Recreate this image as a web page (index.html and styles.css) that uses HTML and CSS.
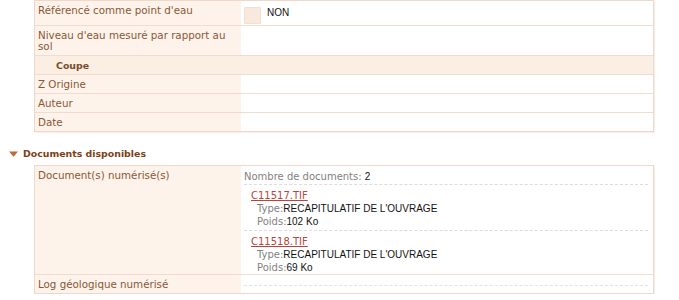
FILE: index.html
```html
<!DOCTYPE html>
<html lang="fr">
<head>
<meta charset="utf-8">
<title>Fiche ouvrage</title>
<link rel="stylesheet" href="styles.css">
</head>
<body>
<div class="sheet">
  <div class="table">
    <div class="row">
      <div class="label">Référencé comme point d'eau</div>
      <div class="value check-cell"><span class="checkbox"></span><span class="val">NON</span></div>
    </div>
    <div class="row">
      <div class="label">Niveau d'eau mesuré par rapport au sol</div>
      <div class="value"></div>
    </div>
    <div class="row group">
      <div class="group-title">Coupe</div>
    </div>
    <div class="row">
      <div class="label">Z Origine</div>
      <div class="value"></div>
    </div>
    <div class="row">
      <div class="label">Auteur</div>
      <div class="value"></div>
    </div>
    <div class="row last">
      <div class="label">Date</div>
      <div class="value"></div>
    </div>
  </div>

  <div class="section-title">
    <svg class="caret" width="9" height="6" viewBox="0 0 9 6"><path d="M0 0.5 H9 L4.5 5.8 Z" fill="#c2692f"/></svg>
    <span>Documents disponibles</span>
  </div>

  <div class="table docs">
    <div class="row">
      <div class="label">Document(s) numérisé(s)</div>
      <div class="value doc-cell">
        <div class="doc-count"><span class="key">Nombre de documents: </span><span class="val">2</span></div>
        <div class="doc">
          <a class="doc-link" href="#">C11517.TIF</a>
          <div class="doc-line"><span class="key">Type:</span><span class="val">RECAPITULATIF DE L'OUVRAGE</span></div>
          <div class="doc-line"><span class="key">Poids:</span><span class="val">102 Ko</span></div>
        </div>
        <div class="doc">
          <a class="doc-link" href="#">C11518.TIF</a>
          <div class="doc-line"><span class="key">Type:</span><span class="val">RECAPITULATIF DE L'OUVRAGE</span></div>
          <div class="doc-line"><span class="key">Poids:</span><span class="val">69 Ko</span></div>
        </div>
      </div>
    </div>
    <div class="row last">
      <div class="label">Log géologique numérisé</div>
      <div class="value"><div class="empty-dash"></div></div>
    </div>
  </div>
</div>
</body>
</html>
```
FILE: styles.css
```css
html, body {
  margin: 0;
  padding: 0;
  background: #ffffff;
}
body {
  font-family: "DejaVu Sans", Verdana, sans-serif;
  font-size: 10px;
  color: #8c5a3c;
}
.sheet {
  display: flex;
  flex-direction: column;
}
.table {
  margin-left: 34px;
  width: 620px;
  box-sizing: border-box;
  border: 1px solid #efd8ca;
  box-shadow: 1px 1px 0 #f9efe8;
  display: flex;
  flex-direction: column;
}
.row {
  display: grid;
  grid-template-columns: 206px 1fr;
  border-bottom: 1px solid #f1dccf;
}
.row.last {
  border-bottom: none;
}
.label {
  background: #fdf3ea;
  padding: 4px 6px 3px 3px;
  line-height: 11px;
  font-size: 10.3px;
  color: #8a5736;
}
.value {
  padding: 4px 3px 3px 3px;
  line-height: 11px;
  background: #ffffff;
}
.check-cell {
  display: flex;
  align-items: flex-start;
  gap: 6px;
  padding-top: 6px;
  padding-bottom: 1px;
}
.checkbox {
  width: 15px;
  height: 15px;
  background: #f9e9dd;
  border: 1px solid #f1dfd3;
  border-radius: 1px;
}
.check-cell .val {
  margin-top: 0;
}
.val {
  font-family: "Liberation Sans", Arial, sans-serif;
  font-size: 10px;
  color: #111111;
}
.group {
  grid-template-columns: 1fr;
  background: #fbeee3;
}
.group-title {
  padding: 4px 3px 3px 21px;
  line-height: 11px;
  font-weight: bold;
  font-size: 9.4px;
  color: #7a4a2c;
}
.section-title {
  display: flex;
  align-items: center;
  gap: 5px;
  margin: 16px 0 5px 9px;
  line-height: 12px;
  font-weight: bold;
  font-size: 9.4px;
  color: #7d3f17;
}
.caret {
  display: block;
}
.doc-cell {
  padding: 4px 5px 0 3px;
  line-height: 13px;
}
.key {
  color: #7f7f7f;
}
.doc-count {
  padding-bottom: 1px;
  border-bottom: 1px dashed #dcdcdc;
}
.doc {
  padding: 4px 0 2px 7px;
  border-bottom: 1px dashed #dcdcdc;
}
.doc:last-child {
  border-bottom: none;
  padding-bottom: 0;
}
.doc-link {
  color: #b5463c;
  text-decoration: underline;
}
.doc-line {
  padding-left: 6px;
}
.empty-dash {
  height: 6px;
  margin-right: 2px;
  border-bottom: 1px dashed #e2e2e2;
}
```
